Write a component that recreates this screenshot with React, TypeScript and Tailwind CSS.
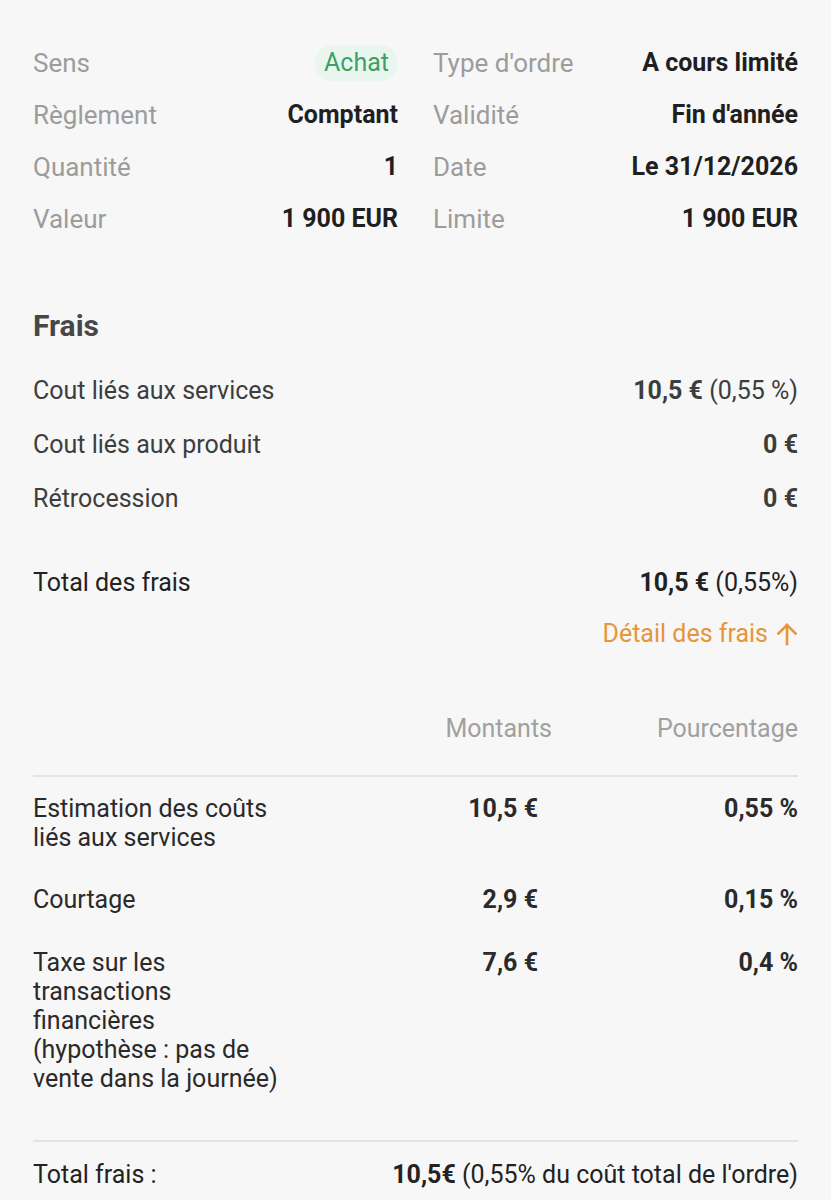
import React from "react";

const font = { fontFamily: "Roboto, 'Noto Sans', sans-serif" };

function InfoRow({ label, value, pill }: { label: string; value: string; pill?: boolean }) {
  return (
    <div className="flex items-center justify-between h-[52px]">
      <span className="text-[#9c9c9c] text-[26px]">{label}</span>
      {pill ? (
        <span className="rounded-full bg-[#e9f6ef] text-[#3c9f66] px-[9px] h-[36px] flex items-center">{value}</span>
      ) : (
        <span className="font-bold text-[#1f1f1f]">{value}</span>
      )}
    </div>
  );
}

function FeeRow({ label, bold, rest }: { label: string; bold: string; rest?: string }) {
  return (
    <div className="flex items-center justify-between h-[54px]">
      <span className="text-[#3d3d3d]">{label}</span>
      <span className="text-[#3d3d3d]">
        <span className="font-bold">{bold}</span>
        {rest ? <span> {rest}</span> : null}
      </span>
    </div>
  );
}

function TableRow({ label, amount, pct, className }: { label: React.ReactNode; amount: string; pct: string; className?: string }) {
  return (
    <div className={"grid grid-cols-[255px_1fr_1fr] items-start leading-[29px] text-[#2a2a2a] " + (className || "")}>
      <span>{label}</span>
      <span className="font-bold text-right pr-[5px]">{amount}</span>
      <span className="font-bold text-right">{pct}</span>
    </div>
  );
}

export default function App() {
  return (
    <div className="min-h-[1200px] bg-[#f7f7f7] text-[25px]" style={font}>
      <div className="px-[33px] pt-[37px]">
        <div className="grid grid-cols-2 gap-x-[35px]">
          <div>
            <InfoRow label="Sens" value="Achat" pill />
            <InfoRow label="Règlement" value="Comptant" />
            <InfoRow label="Quantité" value="1" />
            <InfoRow label="Valeur" value="1 900 EUR" />
          </div>
          <div>
            <InfoRow label="Type d'ordre" value="A cours limité" />
            <InfoRow label="Validité" value="Fin d'année" />
            <InfoRow label="Date" value="Le 31/12/2026" />
            <InfoRow label="Limite" value="1 900 EUR" />
          </div>
        </div>

        <h2 className="mt-[65px] text-[30px] font-bold text-[#474747] leading-[32px]">Frais</h2>

        <div className="mt-[22px]">
          <FeeRow label="Cout liés aux services" bold="10,5 €" rest="(0,55 %)" />
          <FeeRow label="Cout liés aux produit" bold="0 €" />
          <FeeRow label="Rétrocession" bold="0 €" />
        </div>

        <div className="mt-[41px] flex items-center justify-between h-[32px] text-[#222]">
          <span>Total des frais</span>
          <span>
            <span className="font-bold">10,5 €</span> (0,55%)
          </span>
        </div>

        <div className="mt-[16px] flex justify-end">
          <span className="flex items-center gap-[8px] text-[#e5963a]">
            Détail des frais
            <svg width="22" height="24" viewBox="0 0 22 24" fill="none" stroke="#e5963a" strokeWidth="2.6" strokeLinecap="square">
              <path d="M11 22V3" />
              <path d="M2.5 11.5L11 3l8.5 8.5" />
            </svg>
          </span>
        </div>

        <div className="mt-[60px] grid grid-cols-[255px_1fr_1fr] text-[#a0a0a0] leading-[32px]">
          <span />
          <span className="text-right -mr-[9px]">Montants</span>
          <span className="text-right">Pourcentage</span>
        </div>

        <div className="mt-[30px] h-[2px] bg-[#e3e3e6]" />

        <TableRow className="mt-[17px]" label={<>Estimation des coûts<br />liés aux services</>} amount="10,5 €" pct="0,55 %" />
        <TableRow className="mt-[33px]" label="Courtage" amount="2,9 €" pct="0,15 %" />
        <TableRow className="mt-[34px]" label={<>Taxe sur les<br />transactions<br />financières<br />(hypothèse : pas de<br />vente dans la journée)</>} amount="7,6 €" pct="0,4 %" />

        <div className="mt-[47px] h-[2px] bg-[#e3e3e6]" />

        <div className="mt-[17px] flex items-center justify-between leading-[32px] text-[#222]">
          <span>Total frais :</span>
          <span>
            <span className="font-bold">10,5€</span> (0,55% du coût total de l'ordre)
          </span>
        </div>
      </div>
    </div>
  );
}
